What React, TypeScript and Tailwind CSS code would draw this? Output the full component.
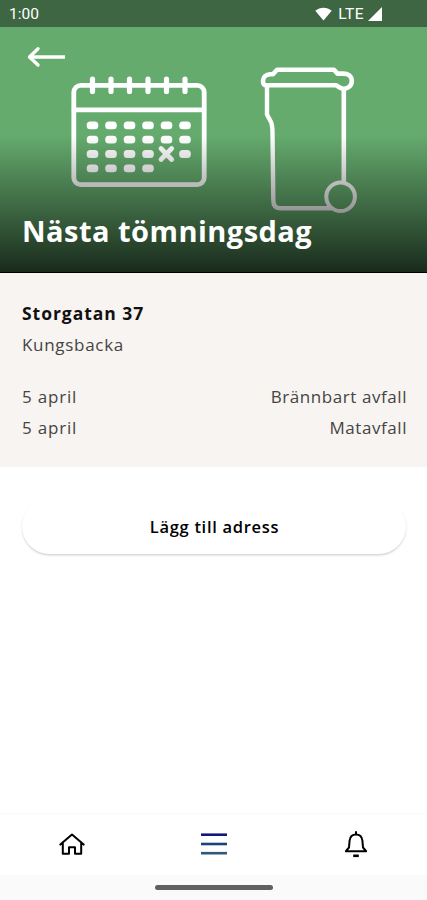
import React from 'react';

const PICKUPS = [
  { date: '5 april', type: 'Brännbart avfall' },
  { date: '5 april', type: 'Matavfall' },
];

const DAY_COLUMNS = [92.5, 111, 129.5, 148, 166.5, 185];
const DAY_ROWS = [125.3, 139.7, 154, 168.4];

const StatusBar: React.FC = () => (
  <div className="relative z-10 flex h-[27px] items-center justify-between bg-[#3f6643] pl-[9px] pr-[45px] font-[Roboto] text-white">
    <span className="mt-[2px] text-[15.5px] leading-none">1:00</span>
    <div className="flex items-center">
      <svg width="17" height="14" viewBox="0 0 17 14" fill="currentColor">
        <path d="M0.3 3.8C5 -0.2 12 -0.2 16.7 3.8L8.5 13.6Z" />
      </svg>
      <span className="ml-[6px] mt-[2px] text-[15.5px] leading-none tracking-[0.5px]">LTE</span>
      <svg className="ml-[4px]" width="14" height="14" viewBox="0 0 14 14" fill="currentColor">
        <path d="M14 0V14H0Z" />
      </svg>
    </div>
  </div>
);

const HeaderArt: React.FC = () => (
  <svg
    className="absolute inset-0"
    width="427"
    height="273"
    viewBox="0 0 427 273"
    fill="none"
    stroke="white"
    strokeWidth="4.8"
    strokeLinecap="round"
    strokeLinejoin="round"
  >
    {/* Calendar */}
    <rect x="73.8" y="85.3" width="130.4" height="99.4" rx="7" />
    <path d="M74 109.8H204" />
    {DAY_COLUMNS.map((x) => (
      <path key={x} d={`M${x} 79V91.5`} strokeWidth="5.2" />
    ))}
    {DAY_ROWS.map((y, row) =>
      DAY_COLUMNS.map((x, col) => {
        if ((row === 2 && col === 4) || (row === 3 && col > 3)) return null;
        return (
          <rect key={`${x}-${y}`} x={x - 5.8} y={y - 3.9} width="11.6" height="7.8" rx="3.5" fill="white" stroke="none" />
        );
      })
    )}
    <path d="M161 148.5L171.7 159.5M171.7 148.5L161 159.5" strokeWidth="4.8" />

    {/* Waste bin */}
    <path
      d="M266.5 85.3H336L341 88.2C346 90 351.8 86.5 351.8 81C351.8 76 347.5 73.6 343.5 73.6H337.5L334 69.8H277L273 74.2H270C266 74.5 263 77 263 81C263 84 264 85.3 266.5 85.3Z"
      strokeWidth="4.6"
    />
    <path
      d="M267 87V114.5L271 122C272.3 125 272.4 128 272.5 132L273.3 200C273.3 205.5 275.5 208.2 280 208.2H331"
      strokeWidth="4.4"
    />
    <path d="M343.8 90V182" strokeWidth="4.6" />
    <circle cx="340.6" cy="196.7" r="14.3" strokeWidth="4" />
  </svg>
);

const Header: React.FC = () => (
  <header className="relative flex h-[273px] flex-col bg-[#65ab6e]">
    <HeaderArt />
    <div className="absolute inset-x-0 bottom-0 h-[138px] border-b border-black bg-linear-to-b from-transparent to-black/75" />
    <StatusBar />
    <button className="relative ml-[27px] mt-[19px] self-start text-white" aria-label="Tillbaka">
      <svg width="40" height="22" viewBox="0 0 40 22" fill="none" stroke="currentColor" strokeWidth="3.4">
        <path d="M38 11H2.5" />
        <path d="M11 2.8L2.5 11L11 19" strokeLinecap="round" strokeLinejoin="round" />
      </svg>
    </button>
    <h1 className="relative mb-[21px] ml-[22px] mt-auto whitespace-nowrap text-[29px] font-bold leading-[42px] tracking-[0.47px] text-white">
      Nästa tömningsdag
    </h1>
  </header>
);

const TabBar: React.FC = () => (
  <nav className="mt-auto grid h-[62px] grid-cols-3 place-items-center border-t border-[#fafafa] bg-white pb-[2px] pl-px text-black">
    <svg width="28" height="24" viewBox="0 0 28 24" fill="none" stroke="currentColor" strokeWidth="2" strokeLinecap="round" strokeLinejoin="round">
      <path d="M2.3 12.6L14 2.6L25.7 12.6M4.8 11V21.8H11V15.2H17V21.8H23.2V11" />
    </svg>
    <svg width="26" height="24" viewBox="0 0 26 24" fill="none" strokeWidth="2.6">
      <path d="M0 2.7H26" stroke="#11177d" />
      <path d="M0 12H26" stroke="#174579" />
      <path d="M0 21.2H26" stroke="#315878" />
    </svg>
    <svg width="24" height="28" viewBox="0 0 24 28" fill="none" stroke="currentColor" strokeWidth="2" strokeLinejoin="round">
      <path d="M12 2V4.2M1.9 21.2H22.1L19 17.5L18.4 10.5C18 6.8 15.5 4.4 12 4.4S6 6.8 5.6 10.5L5 17.5Z" strokeLinecap="round" />
      <path d="M9.2 25.8H14.8" strokeWidth="2.6" />
    </svg>
  </nav>
);

export default function App() {
  return (
    <div className="flex h-[900px] w-[427px] flex-col overflow-hidden bg-white font-['Open_Sans',sans-serif] text-[#111]">
      <Header />

      <section className="h-[194px] bg-[#f8f4f1] pl-[22px] pr-[20px] pt-[27px]">
        <h2 className="text-[17.5px] font-bold leading-[26px] tracking-[0.95px]">Storgatan 37</h2>
        <p className="mt-[6px] text-[17px] leading-[26px] tracking-[0.7px] text-[#444]">Kungsbacka</p>
        <div className="mt-[23px]">
          {PICKUPS.map((pickup) => (
            <div key={pickup.type} className="flex h-[31px] items-center justify-between text-[17px] text-[#444]">
              <span className="tracking-[0.8px]">{pickup.date}</span>
              <span className="tracking-[0.57px]">{pickup.type}</span>
            </div>
          ))}
        </div>
      </section>

      <button className="ml-[22px] mr-[21px] mt-[32px] h-[55px] rounded-full bg-white pl-px pt-[2px] text-[16.5px] font-semibold tracking-[0.7px] text-black shadow-[0_1.5px_2px_rgba(0,0,0,0.17)]">
        Lägg till adress
      </button>

      <TabBar />
      <footer className="flex h-[25px] justify-center bg-[#fafafa] pt-[10px]">
        <div className="h-[5px] w-[118px] rounded-full bg-[#606060]" />
      </footer>
    </div>
  );
}
